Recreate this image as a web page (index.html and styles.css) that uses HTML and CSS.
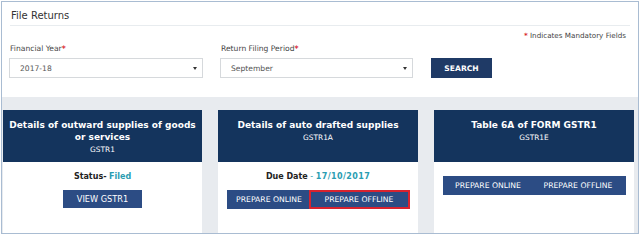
FILE: index.html
```html
<!DOCTYPE html>
<html>
<head>
<meta charset="utf-8">
<link rel="stylesheet" href="styles.css">
</head>
<body>
<div class="frame">
  <div class="top">
    <div class="title">File Returns</div>
    <div class="mandatory"><span class="req">*</span> Indicates Mandatory Fields</div>
    <div class="fields">
      <div class="field f1">
        <div class="label">Financial Year<span class="req">*</span></div>
        <div class="select"><span>2017-18</span><i class="caret"></i></div>
      </div>
      <div class="field f2">
        <div class="label">Return Filing Period<span class="req">*</span></div>
        <div class="select"><span>September</span><i class="caret"></i></div>
      </div>
      <div class="field f3">
        <div class="btn search">SEARCH</div>
      </div>
    </div>
  </div>
  <div class="cards">
    <div class="card c1">
      <div class="head">
        <div class="htitle">Details of outward supplies of goods or services</div>
        <div class="hsub">GSTR1</div>
      </div>
      <div class="body">
        <div class="status"><b>Status-</b> <span class="teal">Filed</span></div>
        <div class="btnrow"><div class="btn view">VIEW GSTR1</div></div>
      </div>
    </div>
    <div class="card c2">
      <div class="head">
        <div class="htitle">Details of auto drafted supplies</div>
        <div class="hsub">GSTR1A</div>
      </div>
      <div class="body">
        <div class="status"><b>Due Date</b> <span class="dash">-</span> <span class="teal date">17/10/2017</span></div>
        <div class="btnrow"><div class="btn online">PREPARE ONLINE</div><div class="btn offline hl">PREPARE OFFLINE</div></div>
      </div>
    </div>
    <div class="card c3">
      <div class="head">
        <div class="htitle">Table 6A of FORM GSTR1</div>
        <div class="hsub">GSTR1E</div>
      </div>
      <div class="body b3">
        <div class="btnrow"><div class="btn online">PREPARE ONLINE</div><div class="btn offline">PREPARE OFFLINE</div></div>
      </div>
    </div>
  </div>
</div>
</body>
</html>
```
FILE: styles.css
```css
* { box-sizing: border-box; }
html, body { margin: 0; padding: 0; background: #fff; }
body {
  padding: 1px 0 0 1px;
  font-family: "DejaVu Sans", Verdana, sans-serif;
  color: #333;
}
.frame {
  width: 638px;
  height: 233px;
  border: 1px solid #a9bcd2;
  display: flex;
  flex-direction: column;
  background: #fff;
}
.top {
  padding: 0 8px 0 8px;
  height: 95px;
}
.title {
  font-size: 10px;
  line-height: 13px;
  padding: 7px 0 3px 1px;
  color: #333;
  border-bottom: 1px solid #e8ecef;
}
.mandatory {
  margin-top: 5px;
  font-size: 7.2px;
  line-height: 10px;
  text-align: right;
  padding-right: 4px;
  color: #444;
}
.req { color: #d7141e; font-weight: bold; }
.fields {
  display: flex;
  align-items: flex-end;
  margin-top: 3px;
}
.field { display: flex; flex-direction: column; }
.f1 { width: 194px; margin-left: -1px; }
.f2 { width: 193px; margin-left: 17px; }
.f3 { margin-left: 18px; }
.label {
  font-size: 7.6px;
  line-height: 10px;
  color: #444;
  padding-left: 1px;
  margin-bottom: 4px;
}
.select {
  height: 20px;
  border: 1px solid #d6d9dc;
  display: flex;
  align-items: center;
  justify-content: space-between;
  padding: 0 5px 0 10px;
  font-size: 7.6px;
  color: #555;
}
.caret {
  width: 0; height: 0;
  border-left: 2px solid transparent;
  border-right: 2px solid transparent;
  border-top: 3px solid #333;
}
.btn {
  background: #2c4c84;
  color: #fff;
  font-size: 7.7px;
  display: flex;
  align-items: center;
  justify-content: center;
  white-space: nowrap;
}
.search {
  background: #1f3a66;
  width: 61px;
  height: 20px;
  font-weight: bold;
  font-size: 7.6px;
}
.cards {
  flex: 1;
  background: #e8ebef;
  display: grid;
  grid-template-columns: 199px 200px 200px;
  column-gap: 16px;
  padding: 13px 0 0 1px;
}
.card {
  background: #fff;
  display: flex;
  flex-direction: column;
}
.head {
  background: #14345d;
  height: 52px;
  color: #fff;
  text-align: center;
  padding: 9px 4px 0 4px;
}
.htitle {
  font-size: 9px;
  font-weight: bold;
  line-height: 12px;
}
.hsub {
  font-size: 7.4px;
  line-height: 10px;
  margin-top: 2px;
}
.body {
  padding-top: 9px;
  display: flex;
  flex-direction: column;
  align-items: center;
}
.b3 { padding-top: 14px; }
.status {
  font-size: 8px;
  line-height: 11px;
  color: #222;
}
.teal { color: #2a9db2; font-weight: bold; }
.dash { color: #2a9db2; }
.date { letter-spacing: 0.4px; }
.btnrow {
  display: flex;
  margin-top: 8px;
}
.b3 .btnrow { margin-top: 0; }
.view {
  width: 79px;
  height: 18px;
  font-size: 8.2px;
}
.c2 .btnrow .btn, .c3 .btnrow .btn { height: 19px; }
.online { padding: 0 6px 0 9px; }
.offline { padding: 0 11px; }
.c2 .online { width: 82px; }
.c2 .offline { width: 101px; }
.c3 .online { width: 88px; }
.c3 .offline { width: 95px; }
.hl { border: 2px solid #d8232f; }
```
